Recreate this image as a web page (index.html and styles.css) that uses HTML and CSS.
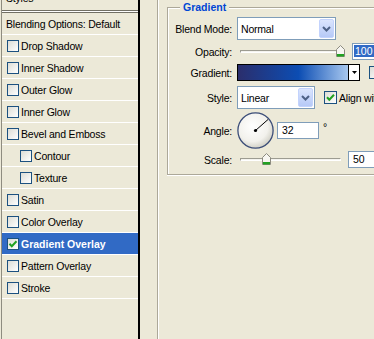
FILE: index.html
```html
<!DOCTYPE html>
<html>
<head>
<meta charset="utf-8">
<link rel="stylesheet" href="styles.css">
</head>
<body>
<div class="app">
  <div class="list">
    <div class="hdr">Styles</div>
    <div class="rule"></div>
    <div class="row blend">Blending Options: Default</div>
    <div class="row"><span class="cb"></span>Drop Shadow</div>
    <div class="row"><span class="cb"></span>Inner Shadow</div>
    <div class="row"><span class="cb"></span>Outer Glow</div>
    <div class="row"><span class="cb"></span>Inner Glow</div>
    <div class="row"><span class="cb"></span>Bevel and Emboss</div>
    <div class="row sub"><span class="cb"></span>Contour</div>
    <div class="row sub"><span class="cb"></span>Texture</div>
    <div class="row"><span class="cb"></span>Satin</div>
    <div class="row"><span class="cb"></span>Color Overlay</div>
    <div class="row sel"><span class="cb"><svg width="10" height="10" viewBox="0 0 10 10"><path d="M1.5 4.8 L3.8 7.2 L8.5 2.3" fill="none" stroke="#21a121" stroke-width="2"/></svg></span>Gradient Overlay</div>
    <div class="row"><span class="cb"></span>Pattern Overlay</div>
    <div class="row"><span class="cb"></span>Stroke</div>
  </div>
  <div class="split"></div>
  <div class="main">
    <div class="grp">
      <div class="grp-title"><span>Gradient</span></div>

      <div class="f r1">
        <label>Blend Mode:</label>
        <div class="combo w-blend"><span class="val">Normal</span><span class="dd"><svg width="9" height="6" viewBox="0 0 9 6"><path d="M1 1 L4.5 4.5 L8 1" fill="none" stroke="#4d6185" stroke-width="2"/></svg></span></div>
      </div>

      <div class="f r2">
        <label>Opacity:</label>
        <div class="slider"><span class="thumb t-op"><svg width="9" height="12" viewBox="0 0 9 12"><path d="M0.5 4.5 L4.5 0.5 L8.5 4.5 V11.5 H0.5 Z" fill="#f7f6f1" stroke="#8c8b80"/><rect x="1" y="9" width="7" height="2.5" fill="#21a121"/></svg></span></div>
        <div class="inp i-op"><span class="hl">100</span></div>
      </div>

      <div class="f r3">
        <label>Gradient:</label>
        <div class="gsw"><span class="g"></span><span class="gb"><svg width="5" height="3" viewBox="0 0 5 3"><path d="M0 0 H5 L2.5 3 Z" fill="#000"/></svg></span></div>
        <span class="cb big rev"></span>
      </div>

      <div class="f r4">
        <label>Style:</label>
        <div class="combo w-style"><span class="val">Linear</span><span class="dd"><svg width="9" height="6" viewBox="0 0 9 6"><path d="M1 1 L4.5 4.5 L8 1" fill="none" stroke="#4d6185" stroke-width="2"/></svg></span></div>
        <span class="cb big align"><svg width="11" height="11" viewBox="0 0 11 11"><path d="M2 5.3 L4.3 7.8 L9 2.8" fill="none" stroke="#21a121" stroke-width="2"/></svg></span>
        <span class="al-txt">Align with Layer</span>
      </div>

      <div class="f r5">
        <label>Angle:</label>
        <svg class="dial" width="37" height="37" viewBox="0 0 37 37">
          <defs>
            <radialGradient id="cg" cx="42%" cy="38%" r="62%">
              <stop offset="0" stop-color="#ffffff"/>
              <stop offset="0.7" stop-color="#f2f1ec"/>
              <stop offset="1" stop-color="#d3d2c8"/>
            </radialGradient>
          </defs>
          <circle cx="18.5" cy="18.5" r="17.6" fill="url(#cg)" stroke="#3b4d78" stroke-width="1.3"/>
          <line x1="18.5" y1="18.5" x2="31" y2="7.5" stroke="#000" stroke-width="1"/>
          <circle cx="18.5" cy="18.5" r="1.6" fill="#000"/>
        </svg>
        <div class="inp i-ang">32</div>
        <span class="deg">°</span>
      </div>

      <div class="f r6">
        <label>Scale:</label>
        <div class="slider"><span class="thumb t-sc"><svg width="9" height="12" viewBox="0 0 9 12"><path d="M0.5 4.5 L4.5 0.5 L8.5 4.5 V11.5 H0.5 Z" fill="#f7f6f1" stroke="#8c8b80"/><rect x="1" y="9" width="7" height="2.5" fill="#21a121"/></svg></span></div>
        <div class="inp i-sc">50</div>
      </div>
    </div>
  </div>
</div>
</body>
</html>
```

FILE: styles.css
```css
html, body {
  margin: 0;
  padding: 0;
}
body {
  width: 374px;
  height: 339px;
  overflow: hidden;
  background: #ece9d8;
  font: 10.5px "Liberation Sans", Arial, sans-serif;
  letter-spacing: -0.2px;
  color: #000;
}
.app {
  display: flex;
  height: 339px;
}

/* left list */
.list {
  flex: none;
  width: 136px;
  margin-left: 1px;
  border-left: 1px solid #8e8c80;
  border-right: 2px solid #000;
}
.hdr {
  height: 22px;
  margin-top: -12px;
  padding-left: 4px;
  line-height: 20px;
  border-bottom: 1px solid #716f64;
}
.rule {
  height: 1px;
  background: #fff;
  border-bottom: 1px solid #716f64;
}
.row {
  height: 21px;
  border-bottom: 1px solid #fff;
  display: flex;
  align-items: center;
  padding-left: 5px;
  white-space: nowrap;
}
.row.blend {
  padding-left: 4px;
}
.row.sub {
  padding-left: 18px;
}
.row.sel {
  background: #316ac5;
  color: #fff;
  font-weight: bold;
  letter-spacing: 0;
}
.cb {
  flex: none;
  width: 12px;
  height: 12px;
  box-sizing: border-box;
  border: 1px solid #1c5180;
  background: linear-gradient(135deg, #dcdcd5, #ffffff);
  margin-right: 2px;
  display: flex;
  align-items: center;
  justify-content: center;
}
.cb.big {
  width: 13px;
  height: 13px;
}

/* separator */
.split {
  flex: none;
  width: 17px;
  border-right: 1px solid #aca899;
  box-shadow: 1px 0 0 #fff;
}

/* main */
.main {
  flex: none;
  padding-left: 9px;
  width: 260px;
}
.grp {
  display: flex;
  flex-direction: column;
  margin-top: 7px;
  border-left: 1px solid #aca899;
  border-bottom: 1px solid #aca899;
  box-shadow: inset 1px 0 0 #fff, 0 1px 0 #fff;
  padding-bottom: 6px;
}
.grp-title {
  margin-top: -7px;
  height: 14px;
  display: flex;
  line-height: 14px;
  font-weight: bold;
  color: #0046d5;
  letter-spacing: 0;
}
.grp-title span {
  padding: 0 3px;
}
.grp-title::before,
.grp-title::after {
  content: "";
  height: 0;
  margin-top: 7px;
  border-top: 1px solid #aca899;
  border-bottom: 1px solid #fff;
}
.grp-title::before {
  width: 12px;
}
.grp-title::after {
  flex: 1;
}

.f {
  display: flex;
  align-items: center;
  white-space: nowrap;
}
.f label {
  flex: none;
  width: 64px;
  margin-right: 5px;
  text-align: right;
}
.r1 { margin-top: 3px; height: 23px; }
.r2 { margin-top: 3px; height: 17px; }
.r3 { margin-top: 4px; height: 17px; }
.r4 { margin-top: 5px; height: 23px; }
.r5 { margin-top: 3px; height: 37px; }
.r6 { margin-top: 2px; height: 17px; }

.combo {
  flex: none;
  height: 23px;
  box-sizing: border-box;
  border: 1px solid #7f9db9;
  background: #fff;
  display: flex;
  align-items: center;
  padding: 0 1px 0 3px;
}
.combo .val {
  flex: 1;
}
.w-blend { width: 99px; }
.w-style { width: 78px; }
.dd {
  width: 15px;
  height: 19px;
  box-sizing: border-box;
  border: 1px solid #c3d3fd;
  border-radius: 2px;
  background: linear-gradient(#dbe5fd, #b6c9f7);
  display: flex;
  align-items: center;
  justify-content: center;
}

.slider {
  flex: none;
  position: relative;
  width: 101px;
  height: 3px;
  margin-left: 3px;
  box-sizing: border-box;
  border-top: 1px solid #9d9c91;
  border-left: 1px solid #9d9c91;
  border-bottom: 1px solid #fff;
  border-right: 1px solid #fff;
  background: #f4f3ee;
}
.thumb {
  position: absolute;
  top: -6px;
  display: block;
  width: 9px;
  height: 12px;
}
.thumb svg { display: block; }
.t-op { left: 95px; }
.t-sc { left: 21px; }

.inp {
  flex: none;
  height: 17px;
  box-sizing: border-box;
  border: 1px solid #7f9db9;
  background: #fff;
  line-height: 15px;
  padding-left: 4px;
  letter-spacing: 0;
}
.i-op {
  margin-left: 11px;
  width: 40px;
  padding-left: 1px;
}
.hl {
  background: #316ac5;
  color: #fff;
  padding: 0 1px;
}
.i-sc {
  margin-left: 7px;
  width: 40px;
}
.i-ang {
  margin-left: 3px;
  width: 42px;
}
.deg {
  margin-left: 4px;
  align-self: flex-start;
  margin-top: 10px;
  line-height: 11px;
}

.gsw {
  flex: none;
  width: 123px;
  height: 17px;
  box-sizing: border-box;
  border: 1px solid #000;
  display: flex;
}
.gsw .g {
  flex: 1;
  background: linear-gradient(90deg, #2b2e6c 0%, #0c4db3 55%, #a8c8ef 100%);
}
.gsw .gb {
  width: 10px;
  border-left: 1px solid #000;
  background: #fff;
  display: flex;
  align-items: center;
  justify-content: center;
}
.rev {
  margin-left: 9px;
}
.align {
  margin-left: 9px;
}
.dial {
  flex: none;
  display: block;
}
```
